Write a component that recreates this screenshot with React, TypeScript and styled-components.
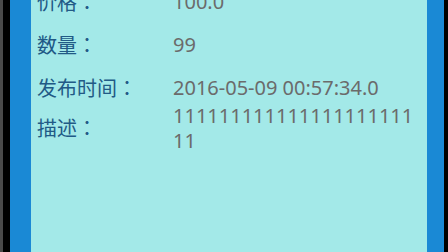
import { createGlobalStyle, styled } from "styled-components";

const GlobalStyle = createGlobalStyle`
  html, body {
    margin: 0;
    padding: 0;
    background: #000;
  }
`;

interface Detail {
  label: string;
  value: string;
  gap: number;
}

const details: Detail[] = [
  { label: "价格：", value: "100.0", gap: -11.5 },
  { label: "数量：", value: "99", gap: 18 },
  { label: "发布时间：", value: "2016-05-09 00:57:34.0", gap: 18 },
  { label: "描述：", value: "11111111111111111111111", gap: 3 },
];

const App = () => {
  return (
    <>
      <GlobalStyle />
      <S.Screen>
        <S.Frame>
          <S.List>
            {details.map((item) => (
              <S.Row key={item.label} $gap={item.gap}>
                <S.Label>{item.label}</S.Label>
                <S.Value>{item.value}</S.Value>
              </S.Row>
            ))}
          </S.List>
        </S.Frame>
      </S.Screen>
    </>
  );
};

export default App;

interface rowProps {
  $gap: number;
}

const S = {
  Screen: styled.div`
    display: flex;
    width: 448px;
    height: 252px;
    box-sizing: border-box;
    background-color: #000;
    border-left: 3px solid #4a4a4a;
    padding: 0 4px 0 7px;
    overflow: hidden;
  `,
  Frame: styled.div`
    flex: 1;
    display: flex;
    flex-direction: column;
    background-color: #a3e9e8;
    border-left: 21px solid #1a89d5;
    border-right: 17px solid #1a89d5;
    overflow: hidden;
  `,
  List: styled.div`
    display: flex;
    flex-direction: column;
    padding-left: 6px;
    font-size: 20px;
    line-height: 25px;
  `,
  Row: styled.div<rowProps>`
    display: flex;
    align-items: center;
    margin-top: ${(props) => props.$gap}px;
  `,
  Label: styled.div`
    width: 136px;
    flex-shrink: 0;
    font-family: "Noto Sans CJK JP", "Noto Sans CJK SC", sans-serif;
    font-feature-settings: "fwid" 1;
    color: #215a86;
  `,
  Value: styled.div`
    width: 246px;
    font-family: "Noto Sans", "Noto Sans CJK SC", sans-serif;
    color: #6b6b6b;
    word-break: break-all;
  `,
};
